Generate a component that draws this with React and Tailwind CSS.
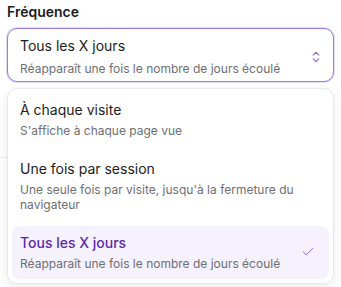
import { Check, ChevronsUpDown } from 'lucide-react';

const options = [
  { id: 'visit', title: 'À chaque visite', desc: "S'affiche à chaque page vue" },
  { id: 'session', title: 'Une fois par session', desc: "Une seule fois par visite, jusqu'à la fermeture du navigateur" },
  { id: 'days', title: 'Tous les X jours', desc: 'Réapparaît une fois le nombre de jours écoulé' },
];

const App = () => {
  const selected = 'days';

  return (
    <div className="h-[287px] overflow-hidden bg-white px-[7px] pt-[2px] font-['Inter',sans-serif] antialiased">
      <label className="block text-[14px] font-semibold leading-[20px] text-[#1c1c1c]">Fréquence</label>

      <button
        type="button"
        className="mt-[6px] flex w-full items-center justify-between rounded-[10px] border border-[#9b7be0] bg-white pb-[4px] pl-[12px] pr-[10px] pt-[7px] text-left shadow-[0_0_0_1px_rgba(155,123,224,0.25)]"
      >
        <div>
          <div className="text-[14px] leading-[20px] text-[#1c1c1c]">Tous les X jours</div>
          <div className="mt-[5px] text-[12px] leading-[16px] text-[#6e6e73]">Réapparaît une fois le nombre de jours écoulé</div>
        </div>
        <ChevronsUpDown className="h-[14px] w-[14px] text-[#7c5cc9]" strokeWidth={1.8} />
      </button>

      <div className="relative">
        <div className="absolute -left-[7px] top-[69px] h-px w-[7px] bg-[#e5e5e5]" />
        <div className="mt-[6px] flex flex-col gap-[6px] rounded-[10px] border border-[#e8e8ea] bg-white p-[4px] shadow-[0_4px_12px_rgba(0,0,0,0.08)]">
          {options.map((opt) => {
            const active = opt.id === selected;
            return (
              <div
                key={opt.id}
                className={`flex items-center justify-between rounded-[8px] pb-[8px] pl-[8px] pr-[14px] pt-[7px] ${
                  active ? 'bg-[#f5f2fe]' : ''
                }`}
              >
                <div className="pr-[16px]">
                  <div className={`text-[14px] leading-[20px] ${active ? 'font-medium text-[#5b2aa8]' : 'text-[#1c1c1c]'}`}>
                    {opt.title}
                  </div>
                  <div className="mt-[3px] text-[12px] leading-[15px] text-[#6e6e73]">{opt.desc}</div>
                </div>
                {active && <Check className="h-[14px] w-[14px] shrink-0 text-[#7c5cc9]" strokeWidth={1.6} />}
              </div>
            );
          })}
        </div>
      </div>
    </div>
  );
};

export default App;
